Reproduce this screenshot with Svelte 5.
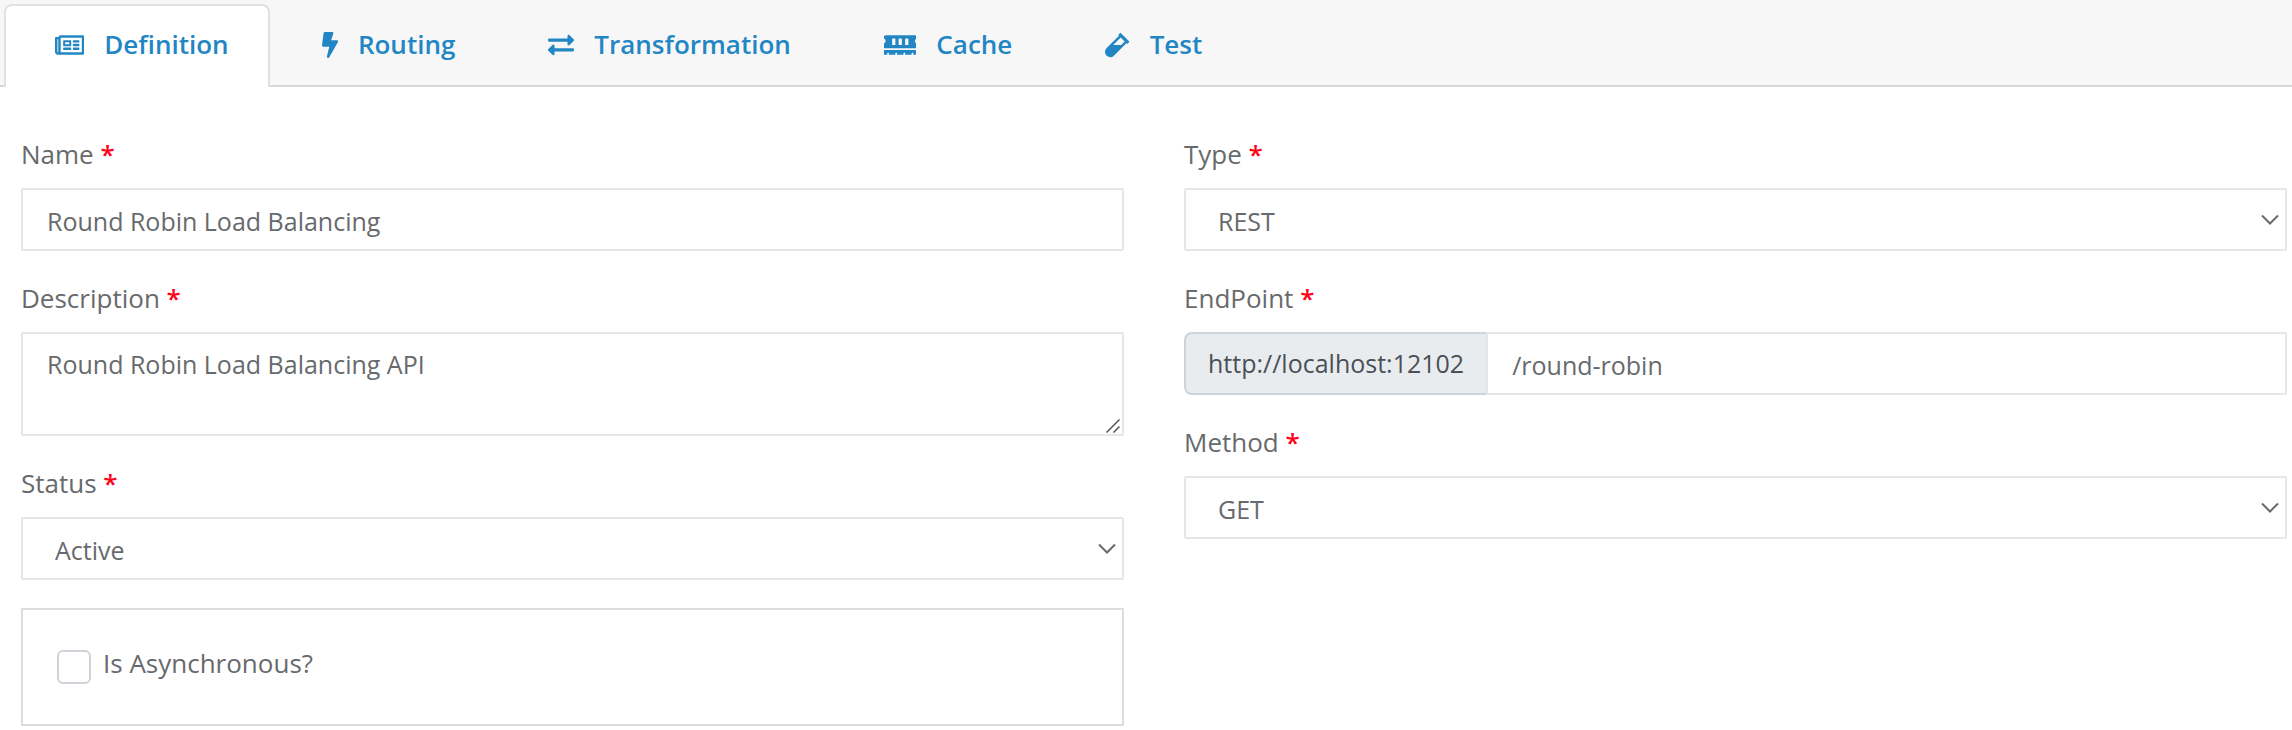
<script lang="ts">
  const tabs = [
    {
      id: 'definition',
      label: 'Definition',
      width: 576,
      path: 'M552 64H112c-20.858 0-38.643 13.377-45.248 32H24c-13.255 0-24 10.745-24 24v272c0 30.928 25.072 56 56 56h496c13.255 0 24-10.745 24-24V88c0-13.255-10.745-24-24-24zM48 392V144h16v248c0 4.411-3.589 8-8 8s-8-3.589-8-8zm480 8H111.422c.374-2.614.578-5.283.578-8V112h416v288zM172 280h136c6.627 0 12-5.373 12-12v-96c0-6.627-5.373-12-12-12H172c-6.627 0-12 5.373-12 12v96c0 6.627 5.373 12 12 12zm28-80h80v40h-80v-40zm-40 140v-24c0-6.627 5.373-12 12-12h136c6.627 0 12 5.373 12 12v24c0 6.627-5.373 12-12 12H172c-6.627 0-12-5.373-12-12zm192 0v-24c0-6.627 5.373-12 12-12h104c6.627 0 12 5.373 12 12v24c0 6.627-5.373 12-12 12H364c-6.627 0-12-5.373-12-12zm0-144v-24c0-6.627 5.373-12 12-12h104c6.627 0 12 5.373 12 12v24c0 6.627-5.373 12-12 12H364c-6.627 0-12-5.373-12-12zm0 72v-24c0-6.627 5.373-12 12-12h104c6.627 0 12 5.373 12 12v24c0 6.627-5.373 12-12 12H364c-6.627 0-12-5.373-12-12z'
    },
    {
      id: 'routing',
      label: 'Routing',
      width: 320,
      path: 'M296 160H180.6l42.6-129.8C227.2 15 215.7 0 200 0H56C44 0 33.8 8.9 32.2 20.8l-32 240C-1.7 275.2 9.5 288 24 288h118.7L96.6 482.5c-3.6 15.2 8 29.5 23.3 29.5 8.4 0 16.4-4.4 20.8-12l176-304c9.3-15.9-2.2-36-20.7-36z'
    },
    {
      id: 'transformation',
      label: 'Transformation',
      width: 512,
      path: 'M0 168v-16c0-13.255 10.745-24 24-24h360V80c0-21.367 25.899-32.042 40.971-16.971l80 80c9.372 9.373 9.372 24.569 0 33.941l-80 80C409.956 271.982 384 261.456 384 240v-48H24c-13.255 0-24-10.745-24-24zm488 152H128v-48c0-21.314-25.862-32.08-40.971-16.971l-80 80c-9.372 9.373-9.372 24.569 0 33.941l80 80C102.057 463.997 128 453.437 128 432v-48h360c13.255 0 24-10.745 24-24v-16c0-13.255-10.745-24-24-24z'
    },
    {
      id: 'cache',
      label: 'Cache',
      width: 640,
      path: 'M640 130.94V96c0-17.67-14.33-32-32-32H32C14.33 64 0 78.33 0 96v34.94c18.6 6.61 32 24.19 32 45.06s-13.4 38.45-32 45.06V320h640v-98.94c-18.6-6.61-32-24.19-32-45.06s13.4-38.45 32-45.06zM224 256h-64V128h64v128zm128 0h-64V128h64v128zm128 0h-64V128h64v128zM0 448h64v-26.67c0-8.84 7.16-16 16-16s16 7.16 16 16V448h128v-26.67c0-8.84 7.16-16 16-16s16 7.16 16 16V448h128v-26.67c0-8.84 7.16-16 16-16s16 7.16 16 16V448h128v-26.67c0-8.84 7.16-16 16-16s16 7.16 16 16V448h64v-96H0v96z'
    },
    {
      id: 'test',
      label: 'Test',
      width: 480,
      path: 'M477.7 186.1L309.5 18.3c-3.1-3.1-8.2-3.1-11.3 0l-34 33.9c-3.1 3.1-3.1 8.2 0 11.3l11.2 11.1L33 316.5c-38.8 38.7-45.1 102-9.4 143.5 20.6 24 49.5 36 78.4 35.9 26.4 0 52.8-10 72.9-30.1l246.3-245.7 11.2 11.1c3.1 3.1 8.2 3.1 11.3 0l34-33.9c3.1-3 3.1-8.1 0-11.2zM318 256H161l148-147.7 78.5 78.3L318 256z'
    }
  ];

  let active = $state('definition');
  let name = $state('Round Robin Load Balancing');
  let description = $state('Round Robin Load Balancing API');
  let status = $state('Active');
  let type = $state('REST');
  let endpoint = $state('/round-robin');
  let method = $state('GET');
  let asynchronous = $state(false);
</script>

{#snippet caption(id: string, text: string)}
  <label class="caption" for={id}>{text} <span class="required">*</span></label>
{/snippet}

{#snippet chevron()}
  <svg class="chevron" viewBox="0 0 18 12" aria-hidden="true">
    <path d="M1 1.5 9 9.500 17 1.500" />
  </svg>
{/snippet}

<div class="tabs" role="tablist">
  {#each tabs as tab (tab.id)}
    <button
      type="button"
      role="tab"
      class="tab"
      class:active={active === tab.id}
      aria-selected={active === tab.id}
      onclick={() => (active = tab.id)}
    >
      <svg class="icon" viewBox="0 0 {tab.width} 512" aria-hidden="true"><path d={tab.path} /></svg>
      <span>{tab.label}</span>
    </button>
  {/each}
</div>

<form class="form">
  <div class="column">
    <div class="field">
      {@render caption('name', 'Name')}
      <input id="name" class="control" type="text" bind:value={name} />
    </div>
    <div class="field">
      {@render caption('description', 'Description')}
      <div class="holder">
        <textarea id="description" class="control area" bind:value={description}></textarea>
        <svg class="grip" viewBox="0 0 14 14" aria-hidden="true">
          <path d="M.5 13.500 13.500.5M7.500 13.500l6-6" />
        </svg>
      </div>
    </div>
    <div class="field">
      {@render caption('status', 'Status')}
      <div class="holder">
        <select id="status" class="control select" bind:value={status}>
          <option>Active</option>
          <option>Passive</option>
        </select>
        {@render chevron()}
      </div>
    </div>
    <div class="panel">
      <input id="asynchronous" class="check" type="checkbox" bind:checked={asynchronous} />
      <label for="asynchronous">Is Asynchronous?</label>
    </div>
  </div>

  <div class="column">
    <div class="field">
      {@render caption('type', 'Type')}
      <div class="holder">
        <select id="type" class="control select" bind:value={type}>
          <option>REST</option>
          <option>SOAP</option>
        </select>
        {@render chevron()}
      </div>
    </div>
    <div class="field">
      {@render caption('endpoint', 'EndPoint')}
      <div class="group">
        <span class="prefix">http://localhost:12102</span>
        <input id="endpoint" class="control" type="text" bind:value={endpoint} />
      </div>
    </div>
    <div class="field">
      {@render caption('method', 'Method')}
      <div class="holder">
        <select id="method" class="control select" bind:value={method}>
          <option>GET</option>
          <option>POST</option>
          <option>PUT</option>
          <option>DELETE</option>
        </select>
        {@render chevron()}
      </div>
    </div>
  </div>
</form>

<style>
  :global(body) {
    background: #fff;
    color: #676a6c;
    font: 26px/39px 'Open Sans', sans-serif;
  }

  .tabs {
    display: flex;
    gap: 1px;
    padding: 4px 4px 0;
    border-bottom: 2px solid #d6d8d9;
    background: #f7f7f7;
  }

  .tab {
    display: flex;
    align-items: center;
    gap: 20px;
    margin-bottom: -2px;
    padding: 19px 39px 23px 49px;
    border: 2px solid transparent;
    border-bottom: 0;
    border-radius: 8px 8px 0 0;
    background: none;
    color: #2386c4;
    font: inherit;
    font-weight: 600;
    cursor: pointer;
  }

  .tab.active {
    border-color: #dee2e6;
    background: #fff;
  }

  .icon {
    height: 26px;
    fill: currentColor;
  }

  .form {
    display: grid;
    grid-template-columns: 1fr 1fr;
    gap: 60px;
    padding: 48px 5px 4px 21px;
  }

  .column {
    display: flex;
    flex-direction: column;
    gap: 28px;
    min-width: 0;
  }

  .field {
    display: flex;
    flex-direction: column;
    gap: 14px;
  }

  .required {
    color: #ff0018;
    font-weight: 600;
  }

  .holder {
    display: grid;
    position: relative;
  }

  .control {
    box-sizing: border-box;
    width: 100%;
    height: 63px;
    margin: 0;
    padding: 11px 24px 9px;
    border: 2px solid #e5e6e7;
    border-radius: 2px;
    outline: 0;
    background: #fff;
    color: inherit;
    font: inherit;
    font-size: 25px;
  }

  .area {
    height: 104px;
    resize: none;
  }

  .select {
    padding: 12px 48px 8px 32px;
    appearance: none;
  }

  .chevron {
    position: absolute;
    top: 26px;
    right: 8px;
    width: 18px;
    height: 12px;
    fill: none;
    stroke: #676a6c;
    stroke-width: 2;
    pointer-events: none;
  }

  .grip {
    position: absolute;
    right: 4px;
    bottom: 3px;
    width: 14px;
    height: 14px;
    fill: none;
    stroke: #555;
    stroke-width: 1.5;
    pointer-events: none;
  }

  .group {
    display: flex;
  }

  .group .control {
    flex: 1;
    min-width: 0;
    border-radius: 0 2px 2px 0;
  }

  .prefix {
    margin-right: -2px;
    padding: 10px 22px;
    border: 2px solid #ced4da;
    border-radius: 8px 0 0 8px;
    background: #e9ecef;
    color: #495057;
    font-size: 25px;
  }

  .panel {
    display: flex;
    align-items: flex-start;
    gap: 12px;
    padding: 34px 34px 40px;
    border: 2px solid #ddd;
  }

  .check {
    box-sizing: border-box;
    width: 34px;
    height: 34px;
    margin: 6px 0 0;
    border: 2px solid #ced4da;
    border-radius: 6px;
    background: #fff;
    appearance: none;
  }

  .check:checked {
    background: #2386c4;
  }
</style>
